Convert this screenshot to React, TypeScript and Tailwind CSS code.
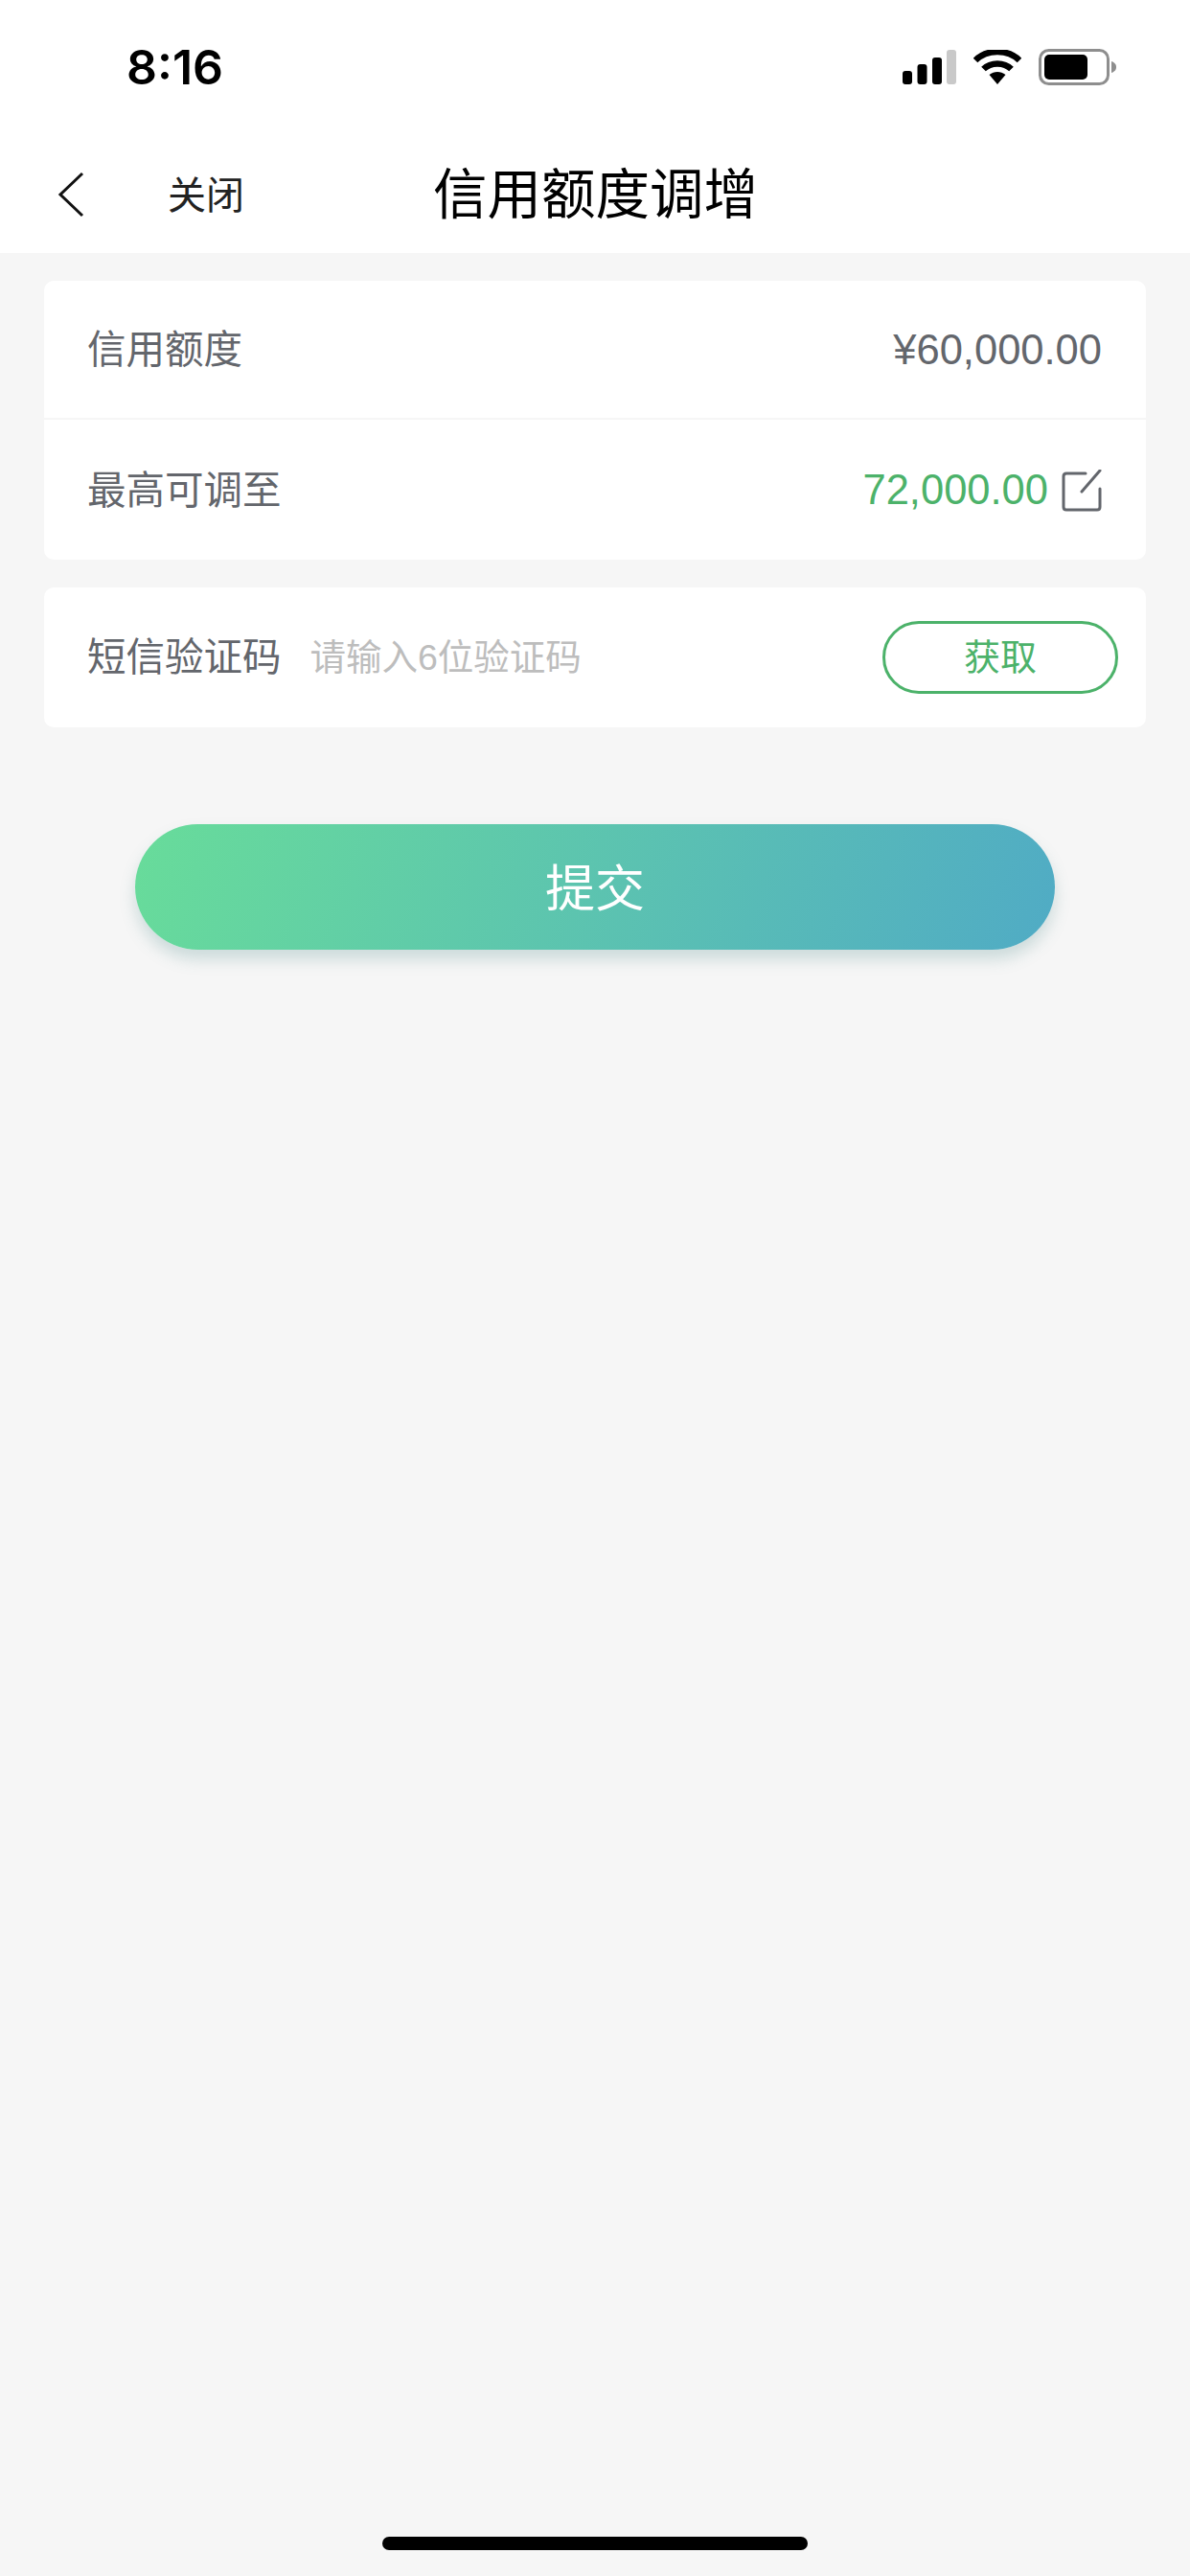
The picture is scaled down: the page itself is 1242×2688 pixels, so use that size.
const FONT = 'font-["Liberation_Sans","Noto_Sans_CJK_SC",sans-serif]'

const StatusIcons = () => (
  <div className="flex items-center">
    <svg width="56" height="36" viewBox="0 0 56 36" className="block">
      <rect x="0" y="22" width="10" height="14" rx="3" fill="#000" />
      <rect x="15.500" y="15" width="10" height="21" rx="3" fill="#000" />
      <rect x="31" y="8" width="10" height="28" rx="3" fill="#000" />
      <rect x="46" y="0" width="10" height="36" rx="3" fill="#c9c9c9" />
    </svg>
    <svg width="50" height="36" viewBox="0 0 50 36" className="ml-[18px] block">
      <path d="M2 11 C14 -1 36 -1 48 11" fill="none" stroke="#000" strokeWidth="6.500" />
      <path d="M10.500 20 C18 12.500 32 12.500 39.500 20" fill="none" stroke="#000" strokeWidth="6.500" />
      <path d="M16.500 26 C21.500 22 28.500 22 33.500 26 L25 36 Z" fill="#000" />
    </svg>
    <svg width="82" height="38" viewBox="0 0 82 38" className="ml-[18px] block">
      <rect x="1.500" y="1.500" width="71" height="35" rx="9" fill="none" stroke="#8e8e8e" strokeWidth="3" />
      <rect x="6" y="6" width="45" height="26" rx="5" fill="#000" />
      <path d="M76 13 C80 14.500 81 16.500 81 19 C81 21.500 80 23.500 76 25 Z" fill="#8e8e8e" />
    </svg>
  </div>
)

const App = () => {
  return (
    <div className={`${FONT} min-h-[2688px] w-[1242px] flex flex-col bg-[#f6f6f6]`}>
      <div className="bg-white">
        <div className="h-[140px] pl-[132px] pr-[76px] pt-[43px] flex items-start justify-between">
          <span className='font-["Inter",sans-serif] text-[50px] leading-[54px] font-semibold text-black'>8:16</span>
          <div className="pt-[8px]">
            <StatusIcons />
          </div>
        </div>
        <div className="relative h-[124px] flex items-center">
          <svg width="30" height="50" viewBox="0 0 30 50" className="ml-[60px] mt-[2px] block">
            <path d="M26 3 L3 25 L26 47" fill="none" stroke="#111" strokeWidth="3" />
          </svg>
          <span className="ml-[85px] mt-[4px] text-[40px] text-[#222] leading-none">关闭</span>
          <span className="absolute left-[452px] top-[36px] text-[56.500px] leading-none text-black">信用额度调增</span>
        </div>
      </div>

      <div className="mt-[29px] mx-[46px] bg-white rounded-[10px]">
        <div className="h-[145px] pt-[2px] flex items-center justify-between pl-[45px] pr-[46px] border-b-2 border-[#f6f6f6]">
          <span className="text-[40.500px] text-[#63666c]">信用额度</span>
          <span className="text-[43.500px] text-[#63666c]">¥60,000.00</span>
        </div>
        <div className="h-[146px] pt-[2px] flex items-center justify-between pl-[45px] pr-[46px]">
          <span className="text-[40.500px] text-[#63666c]">最高可调至</span>
          <div className="flex items-center gap-[14px]">
            <span className="text-[43.500px] text-[#4cb26a]">72,000.00</span>
            <svg width="42" height="44" viewBox="0 0 42 44" className="block">
              <path d="M25 4 H5 Q2 4 2 7 V39 Q2 42 5 42 H37 Q40 42 40 39 V20" fill="none" stroke="#63666c" strokeWidth="3" strokeLinecap="round" />
              <path d="M21 23 L40 1" fill="none" stroke="#63666c" strokeWidth="3" strokeLinecap="round" />
            </svg>
          </div>
        </div>
      </div>

      <div className="mt-[29px] mx-[46px] h-[146px] bg-white rounded-[10px] flex items-center pl-[45px] pr-[29px]">
        <span className="text-[40.500px] text-[#63666c]">短信验证码</span>
        <span className="ml-[30px] text-[37.500px] text-[#bdbdbd]">请输入6位验证码</span>
        <button className="ml-auto w-[246px] h-[76px] rounded-full border-[3px] border-[#4cb26a] text-[38px] leading-none text-[#4cb26a]">
          获取
        </button>
      </div>

      <button className="mt-[101px] mx-[141px] h-[131px] pt-[4px] rounded-[66px] bg-[linear-gradient(110deg,#68dc9a,#50abc5)] text-white text-[52px] shadow-[0_10px_16px_rgba(80,140,140,0.25)]">
        提交
      </button>

      <div className="mt-auto pb-[27px] flex justify-center">
        <div className="w-[444px] h-[14px] rounded-full bg-black" />
      </div>
    </div>
  )
}

export default App
